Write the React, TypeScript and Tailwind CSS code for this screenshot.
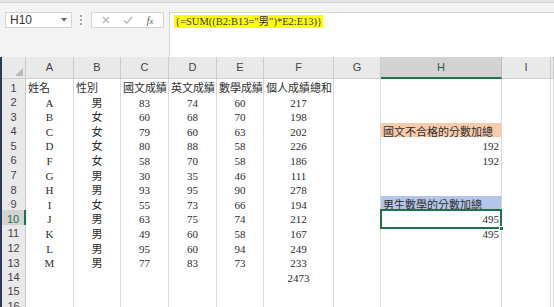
import React from 'react';

type Cell = { v?: string; align?: 'l' | 'c' | 'r'; bg?: string; sel?: boolean };

const font = "font-['Liberation_Serif','Noto_Sans_CJK_TC',serif]";
const uiFont = "font-['Liberation_Sans','Noto_Sans',sans-serif]";

const colLetters = ['A', 'B', 'C', 'D', 'E', 'F', 'G', 'H', 'I', ''];
const gridCols = 'grid-cols-[24px_48px_47px_48px_48px_47px_70px_47px_121px_49px_1fr]';

const people = [
  ['A', '男', '83', '74', '60', '217'],
  ['B', '女', '60', '68', '70', '198'],
  ['C', '女', '79', '60', '63', '202'],
  ['D', '女', '80', '88', '58', '226'],
  ['F', '女', '58', '70', '58', '186'],
  ['G', '男', '30', '35', '46', '111'],
  ['H', '男', '93', '95', '90', '278'],
  ['I', '女', '55', '73', '66', '194'],
  ['J', '男', '63', '75', '74', '212'],
  ['K', '男', '49', '60', '58', '167'],
  ['L', '男', '95', '60', '94', '249'],
  ['M', '男', '77', '83', '73', '233'],
];

// side cells in column H, keyed by row number
const hCol: Record<number, Cell> = {
  4: { v: '國文不合格的分數加總', align: 'l', bg: 'bg-[#f8cbad]' },
  5: { v: '192', align: 'r' },
  6: { v: '192', align: 'r' },
  9: { v: '男生數學的分數加總', align: 'l', bg: 'bg-[#b4c6e7]' },
  10: { v: '495', align: 'r', sel: true },
  11: { v: '495', align: 'r' },
};

function buildRow(r: number): Cell[] {
  const cells: Cell[] = Array.from({ length: 10 }, () => ({}));
  if (r === 1) {
    ['姓名', '性別', '國文成績', '英文成績', '數學成績', '個人成績總和'].forEach((v, i) => {
      cells[i] = { v, align: 'l' };
    });
  } else if (r >= 2 && r <= 13) {
    people[r - 2].forEach((v, i) => {
      cells[i] = { v, align: 'c' };
    });
  } else if (r === 14) {
    cells[5] = { v: '2473', align: 'c' };
  }
  if (hCol[r]) cells[7] = hCol[r];
  return cells;
}

function DataCell({ cell }: { cell: Cell }) {
  const align =
    cell.align === 'r' ? 'justify-end pr-[2px]' : cell.align === 'c' ? 'justify-center' : 'justify-start pl-[2px]';
  return (
    <div
      className={`relative flex items-center overflow-visible whitespace-nowrap border-r border-b border-[#dadada] pt-[1px] text-[11px] text-[#2e2e2e] ${align} ${cell.bg ?? 'bg-white'} ${font}`}
    >
      {cell.v}
      {cell.sel && (
        <>
          <div className="absolute z-10 -left-[1px] -top-[1px] bottom-[-1px] right-[-1px] border-2 border-[#217346]" />
          <div className="absolute z-20 -right-[3px] -bottom-[3px] h-[5px] w-[5px] border border-white bg-[#217346]" />
        </>
      )}
    </div>
  );
}

function App() {
  const rows = Array.from({ length: 16 }, (_, i) => i + 1);

  return (
    <div className="flex h-[307px] w-[554px] flex-col overflow-hidden bg-[#f3f3f3]">
      {/* ribbon edge */}
      <div className="h-[3px] shrink-0 border-b border-[#d6d6d6] bg-[#e4e4e4]" />

      {/* formula bar */}
      <div className="flex h-[54px] shrink-0 items-start pt-[9px] pl-[5px]">
        <div className={`flex h-[16px] w-[67px] items-center justify-between border border-[#d4d4d4] bg-white pl-[4px] pr-[4px] text-[12px] text-[#333] ${uiFont}`}>
          <span>H10</span>
          <svg width="6" height="4" viewBox="0 0 6 4">
            <path d="M0 0h6L3 3.5z" fill="#666" />
          </svg>
        </div>
        <div className="ml-[8px] mt-[3px] flex flex-col gap-[2px]">
          <span className="h-[2px] w-[2px] bg-[#aaa]" />
          <span className="h-[2px] w-[2px] bg-[#aaa]" />
          <span className="h-[2px] w-[2px] bg-[#aaa]" />
        </div>
        <div className="ml-[9px] flex h-[16px] w-[73px] items-center justify-around border border-[#d4d4d4] bg-white px-[3px]">
          <svg width="8" height="8" viewBox="0 0 8 8">
            <path d="M1 1l6 6M7 1L1 7" stroke="#b5b5b5" strokeWidth="1.2" />
          </svg>
          <svg width="10" height="8" viewBox="0 0 10 8">
            <path d="M1 4.5l2.8 2.7L9 1" stroke="#b5b5b5" strokeWidth="1.2" fill="none" />
          </svg>
          <span className={`text-[10px] italic text-[#555] ${font}`}>
            f<span className="text-[8px]">x</span>
          </span>
        </div>
        <div className="ml-[5px] flex h-[46px] flex-1 items-start border-l border-t border-[#d4d4d4] bg-white pl-[4px] pt-[2px]">
          <span className={`bg-[#ffff00] px-[1px] text-[10.5px] leading-[13px] text-[#333] ${font}`}>
            {'{=SUM((B2:B13="男")*E2:E13)}'}
          </span>
        </div>
      </div>

      {/* sheet */}
      <div className="flex flex-1 overflow-hidden">
        <div className="w-[2px] shrink-0 bg-[#2b3a55]" />
        <div className="flex-1 bg-white">
          <div className={`grid ${gridCols} h-[22px] bg-[#e9e9e9]`}>
            <div className="relative border-r border-b border-[#cbcbcb]">
              <svg className="absolute right-[2px] bottom-[2px]" width="8" height="8" viewBox="0 0 8 8">
                <path d="M8 0V8H0z" fill="#b8b8b8" />
              </svg>
            </div>
            {colLetters.map((c, i) => (
              <div
                key={i}
                className={`flex items-center justify-center border-r text-[11px] ${uiFont} ${
                  c === 'H'
                    ? 'border-b-2 border-r-[#bdbdbd] border-b-[#217346] bg-[#d3d3d3] text-[#2b5e3f]'
                    : 'border-b border-[#cbcbcb] text-[#444]'
                }`}
              >
                {c}
              </div>
            ))}
          </div>

          {rows.map((r) => {
            const cells = buildRow(r);
            return (
              <div key={r} className={`grid ${gridCols} h-[14.6px]`}>
                <div
                  className={`flex items-center justify-center border-b text-[11px] ${uiFont} ${
                    r === 10
                      ? 'border-r-2 border-r-[#217346] border-b-[#bdbdbd] bg-[#d3d3d3] text-[#217346]'
                      : 'border-r border-[#cbcbcb] bg-[#e9e9e9] text-[#444]'
                  }`}
                >
                  {r}
                </div>
                {cells.map((cell, i) => (
                  <DataCell key={i} cell={cell} />
                ))}
              </div>
            );
          })}
        </div>
      </div>
    </div>
  );
}

export default App;
